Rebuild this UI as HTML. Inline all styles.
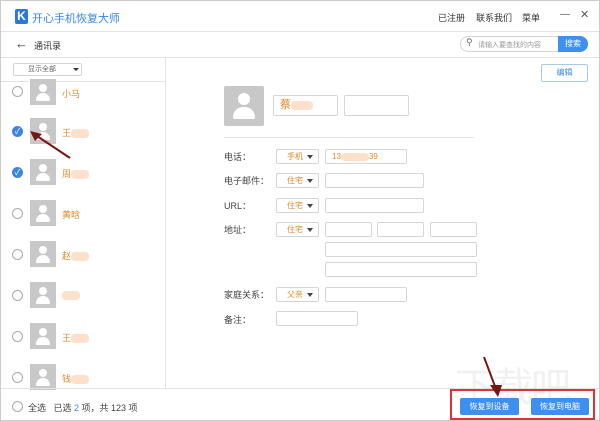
<!DOCTYPE html>
<html><head><meta charset="utf-8"><style>
*{margin:0;padding:0;box-sizing:border-box}
body{width:600px;height:421px;overflow:hidden;background:#fff;font-family:"Liberation Sans","Noto Sans CJK SC",sans-serif;font-size:9px;color:#555;position:relative}
.a{position:absolute}
.box{position:absolute;border:1px solid #d6d6d6;border-radius:2px;background:#fff}
.sel{position:absolute;border:1px solid #d6d6d6;border-radius:2px;background:#fff;color:#e08a2a;font-size:8px;width:43px;height:15px;line-height:13px;padding-left:10px}
.sel:after{content:"";position:absolute;right:5px;top:5px;border:3px solid transparent;border-top:4px solid #444}
.lbl{position:absolute;left:224px;font-size:9px;color:#444}
.av{position:absolute;left:30px;width:26px;height:26px;background:#c8c8c8}
.av:before{content:"";position:absolute;left:9px;top:5px;width:8px;height:8px;border-radius:50%;background:#fff}
.av:after{content:"";position:absolute;left:6px;top:14px;width:14px;height:8px;border-radius:7px 7px 1px 1px;background:#fff}
.rd{position:absolute;left:12px;width:11px;height:11px;border:1px solid #aaa;border-radius:50%}
.ck{position:absolute;left:12px;width:11px;height:11px;border-radius:50%;background:#3d86e8;color:#fff;font-size:8px;line-height:11px;text-align:center}
.nm{position:absolute;left:62px;color:#e08a2a;font-size:9px}
.blur{display:inline-block;width:18px;height:9px;background:#fde0cc;border-radius:4px;vertical-align:middle}
</style></head><body>
<div class="a" style="left:0;top:0;width:600px;height:421px;border:1px solid #ccc"></div>
<div class="a" style="left:15px;top:9px;width:13px;height:15px;background:#2b79d6;border-radius:2px;color:#fff;font-weight:bold;font-size:12px;line-height:15px;text-align:center">K</div>
<div class="a" style="left:32px;top:10px;color:#3a86e0;font-size:11px">开心手机恢复大师</div>
<div class="a" style="left:438px;top:11px;font-size:9px;color:#333">已注册</div>
<div class="a" style="left:476px;top:11px;font-size:9px;color:#333">联系我们</div>
<div class="a" style="left:522px;top:11px;font-size:9px;color:#333">菜单</div>
<div class="a" style="left:560px;top:9px;font-size:10px;color:#555">—</div>
<div class="a" style="left:580px;top:8px;font-size:11px;color:#555">✕</div>
<div class="a" style="left:1px;top:31px;width:598px;height:1px;background:#e3e3e3"></div>
<div class="a" style="left:15px;top:36px;font-size:13px;color:#333">←</div>
<div class="a" style="left:34px;top:39px;font-size:9px;color:#333">通讯录</div>
<div class="a" style="left:460px;top:36px;width:128px;height:16px;border:1px solid #d6d6d6;border-radius:8px"></div>
<div class="a" style="left:466px;top:37px;font-size:9px;color:#666">&#9906;</div>
<div class="a" style="left:478px;top:40px;font-size:7px;color:#999">请输入要查找的内容</div>
<div class="a" style="left:558px;top:36px;width:30px;height:16px;background:#3d8ff0;border-radius:0 8px 8px 0;color:#fff;font-size:8px;line-height:16px;text-align:center">搜索</div>
<div class="a" style="left:1px;top:57px;width:598px;height:1px;background:#e3e3e3"></div>
<div class="a" style="left:165px;top:57px;width:1px;height:331px;background:#e3e3e3"></div>
<div class="box" style="left:13px;top:63px;width:69px;height:13px;font-size:7px;line-height:11px;padding-left:14px;color:#666">显示全部</div>
<div class="a" style="left:73px;top:68px;border:3px solid transparent;border-top:3px solid #333"></div>
<div class="a" style="left:1px;top:81px;width:164px;height:1px;background:#e3e3e3"></div>
<div class="rd" style="top:86px"></div><div class="av" style="top:79px"></div><div class="nm" style="top:87px">小马</div>
<div class="ck" style="top:126px">✓</div><div class="av" style="top:118px"></div><div class="nm" style="top:126px">王<span class="blur"></span></div>
<div class="ck" style="top:167px">✓</div><div class="av" style="top:159px"></div><div class="nm" style="top:167px">周<span class="blur"></span></div>
<div class="rd" style="top:208px"></div><div class="av" style="top:200px"></div><div class="nm" style="top:208px">黄晗</div>
<div class="rd" style="top:249px"></div><div class="av" style="top:241px"></div><div class="nm" style="top:249px">赵<span class="blur"></span></div>
<div class="rd" style="top:290px"></div><div class="av" style="top:282px"></div><div class="nm" style="top:290px"><span class="blur"></span></div>
<div class="rd" style="top:331px"></div><div class="av" style="top:323px"></div><div class="nm" style="top:331px">王<span class="blur"></span></div>
<div class="rd" style="top:372px"></div><div class="av" style="top:364px"></div><div class="nm" style="top:372px">钱<span class="blur"></span></div>
<svg class="a" style="left:28px;top:128px" width="45" height="32"><line x1="42" y1="30" x2="6" y2="6" stroke="#7a1414" stroke-width="2"/><polygon points="2,3 14,6 7,13" fill="#7a1414"/></svg>
<div class="a" style="left:1px;top:388px;width:598px;height:1px;background:#e3e3e3"></div>
<div class="rd" style="left:12px;top:401px"></div>
<div class="a" style="left:28px;top:401px;font-size:9px;color:#444">全选 &nbsp; 已选 <span style="color:#3d86e8">2</span> 项，共 123 项</div>
<div class="a" style="left:455px;top:355px;font-size:40px;color:rgba(210,210,210,.3);letter-spacing:-2px">下载吧</div>
<div class="a" style="left:450px;top:389px;width:145px;height:31px;border:2px solid #e0303a"></div>
<div class="a" style="left:460px;top:398px;width:59px;height:17px;background:#3d8ff0;border-radius:2px;color:#fff;font-size:8px;line-height:17px;text-align:center">恢复到设备</div>
<div class="a" style="left:531px;top:398px;width:58px;height:17px;background:#3d8ff0;border-radius:2px;color:#fff;font-size:8px;line-height:17px;text-align:center">恢复到电脑</div>
<svg class="a" style="left:480px;top:355px" width="30" height="45"><line x1="4" y1="2" x2="16" y2="34" stroke="#7a1414" stroke-width="2"/><polygon points="10,30 22,30 18,42" fill="#7a1414"/></svg>
<div class="box" style="left:541px;top:64px;width:47px;height:18px;border-color:#a8c8ec;color:#3d86e8;font-size:8px;line-height:16px;text-align:center">编辑</div>
<div class="a" style="left:224px;top:86px;width:40px;height:40px;background:#c8c8c8;border-radius:2px"></div>
<div class="a" style="left:238px;top:93px;width:12px;height:12px;border-radius:50%;background:#fff"></div>
<div class="a" style="left:233px;top:107px;width:22px;height:12px;border-radius:11px 11px 2px 2px;background:#fff"></div>
<div class="box" style="left:273px;top:95px;width:65px;height:21px;color:#e08a2a;font-size:11px;line-height:19px;padding-left:6px">蔡<span class="blur" style="width:22px"></span></div>
<div class="box" style="left:344px;top:95px;width:65px;height:21px"></div>
<div class="a" style="left:224px;top:137px;width:250px;height:1px;background:#e6e6e6"></div>
<div class="lbl" style="top:150px">电话：</div><div class="sel" style="left:276px;top:149px">手机</div><div class="box" style="left:325px;top:149px;width:82px;height:15px;color:#e08a2a;font-size:8px;line-height:13px;padding-left:6px">13<span class="blur" style="width:28px;height:8px"></span>39</div>
<div class="lbl" style="top:174px">电子邮件：</div><div class="sel" style="left:276px;top:173px">住宅</div><div class="box" style="left:325px;top:173px;width:99px;height:15px"></div>
<div class="lbl" style="top:199px">URL：</div><div class="sel" style="left:276px;top:198px">住宅</div><div class="box" style="left:325px;top:198px;width:99px;height:15px"></div>
<div class="lbl" style="top:223px">地址：</div><div class="sel" style="left:276px;top:222px">住宅</div>
<div class="box" style="left:325px;top:222px;width:47px;height:15px"></div><div class="box" style="left:377px;top:222px;width:47px;height:15px"></div><div class="box" style="left:430px;top:222px;width:47px;height:15px"></div>
<div class="box" style="left:325px;top:242px;width:152px;height:15px"></div>
<div class="box" style="left:325px;top:262px;width:152px;height:15px"></div>
<div class="lbl" style="top:288px">家庭关系：</div><div class="sel" style="left:276px;top:287px">父亲</div><div class="box" style="left:325px;top:287px;width:82px;height:15px"></div>
<div class="lbl" style="top:313px">备注：</div><div class="box" style="left:276px;top:311px;width:82px;height:15px"></div>
</body></html>
